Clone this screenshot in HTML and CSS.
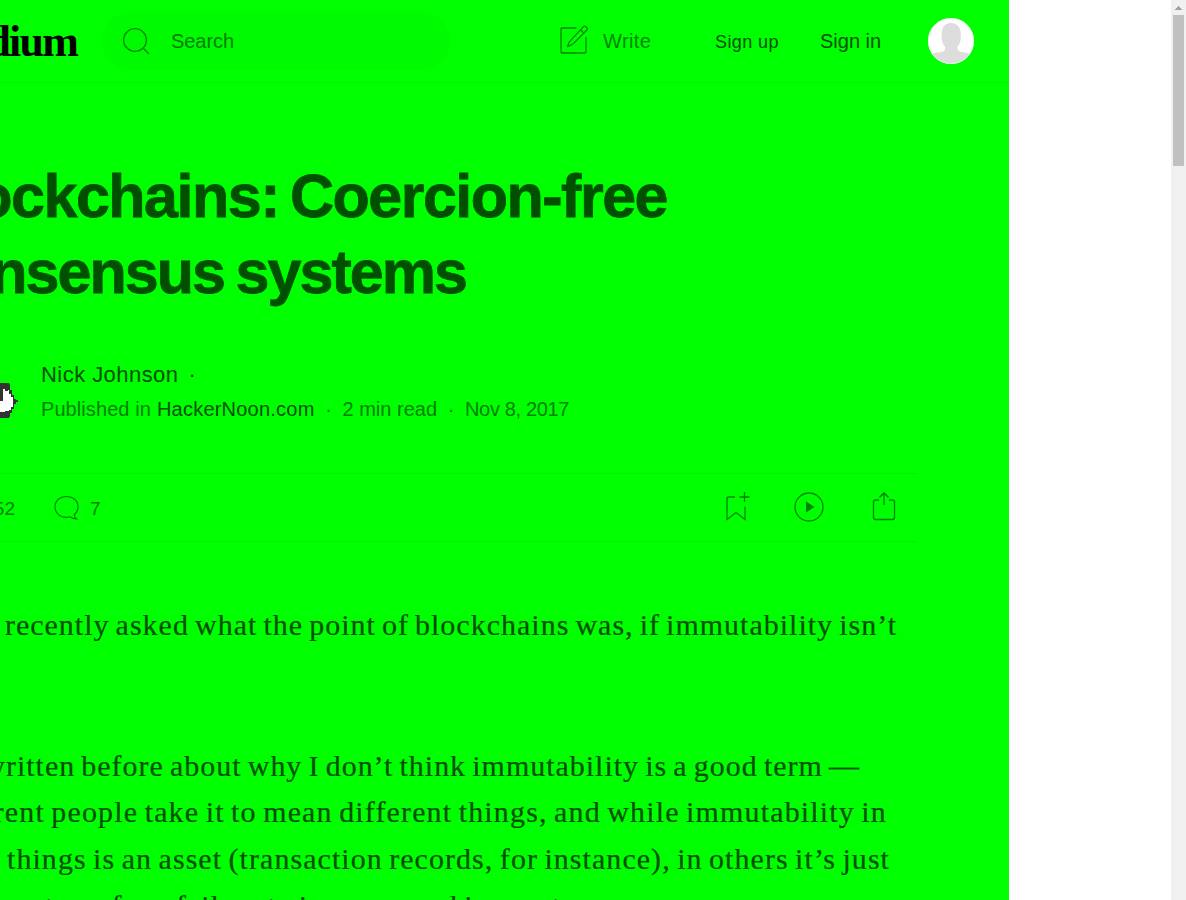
FILE: index.html
```html
<!DOCTYPE html>
<html lang="en">
<head>
<meta charset="utf-8">
<title>Blockchains: Coercion-free consensus systems</title>
<link rel="stylesheet" href="styles.css">
</head>
<body>
<div class="window">
<div class="page">
<header class="topbar">
<div class="logo">Medium</div>
<div class="search">
<svg width="28" height="28" viewBox="0 0 28 28" fill="none" stroke="#008600" stroke-width="1.4"><circle cx="13" cy="13" r="11.4"/><path d="M21 21l6 6"/></svg>
<span class="search-label">Search</span>
</div>
<div class="write">
<svg width="30" height="30" viewBox="0 0 30 30" fill="none" stroke="#008600" stroke-width="1.3"><path d="M17.500 3H3.200q-1.200 0-1.200 1.200V26.800q0 1.200 1.200 1.200H25.800q1.200 0 1.200-1.200V12"/><path d="M24.500 1.600q1-1 2.200 0l1.200 1.200q1 1 0 2.200L14.500 18.500q-2.200 2-5.700 2.800q.4-3.500 2.600-5.700zM21.500 4.700l3.500 3.500"/></svg>
<span class="write-label">Write</span>
</div>
<div class="signup">Sign up</div>
<div class="signin">Sign in</div>
<svg class="profile" width="46" height="46" viewBox="0 0 46 46"><defs><clipPath id="round"><circle cx="23" cy="23" r="23"/></clipPath></defs><g clip-path="url(#round)"><path fill="#fff" d="M0 0h46v46H0z"/><path fill="#ddd" d="M23 5c-7 0-9.400 5-9.400 12 0 6 1 9 3.700 12 0 3-1 4.500-4 5-4 .5-8 1-9 2v10h38V36c-2-1-5-1.500-9-2-3-.5-4-2-4-5 2.700-3 3.600-6 3.600-12 0-7-2.900-12-9.900-12z"/></g><circle cx="23" cy="23" r="22.700" fill="none" stroke="#e6f2e6" stroke-width=".6"/></svg>
</header>
<main>
<h1><span class="line t1">Blockchains: Coercion-free</span><span class="line t2">consensus systems</span></h1>
<section class="byline">
<svg class="author-pic" width="19" height="44" viewBox="0 0 19 44"><circle cx="-4" cy="22" r="22" fill="none" stroke="#12ed12" stroke-width=".8"/><path fill="#333" d="M0 5h9l1 2v5h2v5h2v4h2v1h2v2h-2v2h-2v5h-2v4h-2v3l-1 2H0z"/><path fill="#fff" d="M3 11h2v2h3v-1h1v4h2v3h2v10h-2v3H9v1H5v1H0V23h3z"/></svg>
<div class="byline-text">
<div class="author"><span>Nick Johnson</span><span class="dot">·</span></div>
<div class="meta"><span class="in">Published in</span><span class="pub">HackerNoon.com</span><span class="sep">·</span><span class="read">2 min read</span><span class="sep">·</span><span class="date">Nov 8, 2017</span></div>
</div>
</section>
<section class="actions">
<span class="claps">52</span>
<svg class="comment" width="26" height="26" viewBox="0 0 26 26" fill="none" stroke="#008000" stroke-width="1.2"><path d="M20.200 19.800C22.800 17.700 24 15 24 12 24 5.500 19 1.500 12.500 1.500S1 5.500 1 12s5 10.300 11.500 10.300q2 0 3.500-.5 2.600 2 6.500 2.200-2.300-1.800-2.300-4.200z"/></svg>
<span class="replies">7</span>
<svg class="save" width="26" height="30" viewBox="0 0 26 30" fill="none" stroke="#008000" stroke-width="1.3"><path d="M10 6H3.500q-1.500 0-1.500 1.500V28.500l9-7 9 7V15.500M19.500 1v10M14.500 6h10"/></svg>
<svg class="play" width="30" height="30" viewBox="0 0 30 30"><circle cx="15" cy="15" r="14" fill="none" stroke="#008000" stroke-width="1.3"/><path d="M12 9.500v11l8.500-5.500z" fill="#008000"/></svg>
<svg class="share" width="24" height="30" viewBox="0 0 24 30" fill="none" stroke="#008000" stroke-width="1.3"><path d="M7 9H3.500Q1.500 9 1.500 11V26.500q0 2 2 2H20.500q2 0 2-2V11q0-2-2-2H17M12 14V2M7.500 6.500L12 1.700l4.500 4.800"/></svg>
</section>
<article>
<p class="para"><span class="line b1">I was recently asked what the point of blockchains was, if immutability isn’t</span></p>
<p class="para"><span class="line b2">I’ve written before about why I don’t think immutability is a good term —</span><span class="line b3">different people take it to mean different things, and while immutability in</span><span class="line b4">some things is an asset (transaction records, for instance), in others it’s just</span><span class="line b5">systems for a failure to improve and innovate.</span></p>
</article>
</main>
</div>
<div class="scrollbar"><svg class="arrow" width="7" height="4" viewBox="0 0 7 4"><path fill="#a0a0a0" d="M3 0h1v1h1v1h1v1h1v1H0V3h1V2h1V1h1z"/></svg><div class="thumb"></div></div>
</div>
</body>
</html>
```
FILE: styles.css
```css
* { box-sizing: border-box; }
body { margin: 0; background: #fff; font-family: "Liberation Sans", Arial, sans-serif; overflow: hidden; }
.window { display: flex; justify-content: space-between; width: 1186px; height: 900px; overflow: hidden; }
.page { width: 1009px; height: 900px; background: #0f0; overflow: hidden; }
.topbar { display: flex; align-items: center; height: 83px; border-bottom: 1px solid #00f200; white-space: nowrap; }
.logo { display: flex; justify-content: flex-end; width: 77px; flex: none; padding-top: 2px; font: bold 44px/60px "Liberation Serif", serif; letter-spacing: -1.800px; color: #000; }
.search { display: flex; align-items: center; gap: 21px; width: 348px; height: 58px; flex: none; margin-left: 25px; padding-left: 20px; border-radius: 29px; background: #00fa00; color: #008000; font-size: 20px; }
.search-label { letter-spacing: -.05px; }
.write { display: flex; align-items: center; gap: 14px; width: 156px; flex: none; margin-left: 109px; color: #008600; font-size: 20px; }
.write svg { margin-top: -2px; }
.write-label { letter-spacing: .4px; }
.signup { width: 105px; flex: none; color: #005000; font-size: 18px; padding-top: 2px; letter-spacing: .4px; }
.signin { width: 108px; flex: none; color: #005000; font-size: 20px; letter-spacing: 0; }
.profile { flex: none; }
.line { display: flex; justify-content: flex-end; white-space: nowrap; }
h1 { margin: 75px 0 0; font-size: 61px; line-height: 76px; font-weight: bold; color: #005000; -webkit-text-stroke: .8px #005000; }
.t1 { width: 667px; letter-spacing: -1.500px; word-spacing: -4.500px; }
.t2 { width: 466px; letter-spacing: -1.950px; word-spacing: -3.500px; }
.byline { display: flex; height: 78px; margin-top: 46px; white-space: nowrap; }
.author-pic { flex: none; margin-top: 22px; }
.byline-text { padding: 2px 0 0 22px; }
.author { display: flex; gap: 10px; font-size: 22px; line-height: 34px; color: #005000; letter-spacing: .45px; }
.meta { display: flex; font-size: 20px; line-height: 35px; color: #008000; }
.in { letter-spacing: .08px; }
.pub { margin-left: 6px; color: #005000; letter-spacing: .22px; }
.sep { width: 28px; text-align: center; }
.date { letter-spacing: -.35px; }
.actions { display: flex; align-items: center; width: 916px; height: 69px; margin-top: 39px; border-top: 1px solid #00ed00; border-bottom: 1px solid #00ed00; color: #008000; font-size: 19px; }
.claps { display: flex; justify-content: flex-end; width: 15px; flex: none; padding-top: 2px; }
.comment { margin-left: 39px; }
.replies { margin-left: 10px; padding-top: 2px; }
.save { margin: 0 0 4px auto; }
.play { margin: 0 0 2px 43px; }
.share { margin: 0 20px 4px 48px; }
article { padding-top: 60px; font: 30px/46.670px "Liberation Serif", serif; color: #005000; -webkit-text-stroke: .2px #005000; }
.para { margin: 0 0 94px; }
.b1 { width: 897px; letter-spacing: 1px; word-spacing: -2.400px; }
.b2 { width: 860px; letter-spacing: .98px; word-spacing: -2.300px; }
.b3 { width: 887px; letter-spacing: 1.150px; word-spacing: -2.200px; }
.b4 { width: 890px; letter-spacing: 1.050px; word-spacing: -2.100px; }
.b5 { width: 584px; letter-spacing: 1px; word-spacing: -2.400px; }
.scrollbar { display: flex; flex-direction: column; align-items: center; width: 15px; flex: none; background: #f0f0f0; }
.arrow { margin-top: 6px; }
.thumb { width: 11px; height: 151px; margin-top: 5px; background: #c0c0c0; }
```
